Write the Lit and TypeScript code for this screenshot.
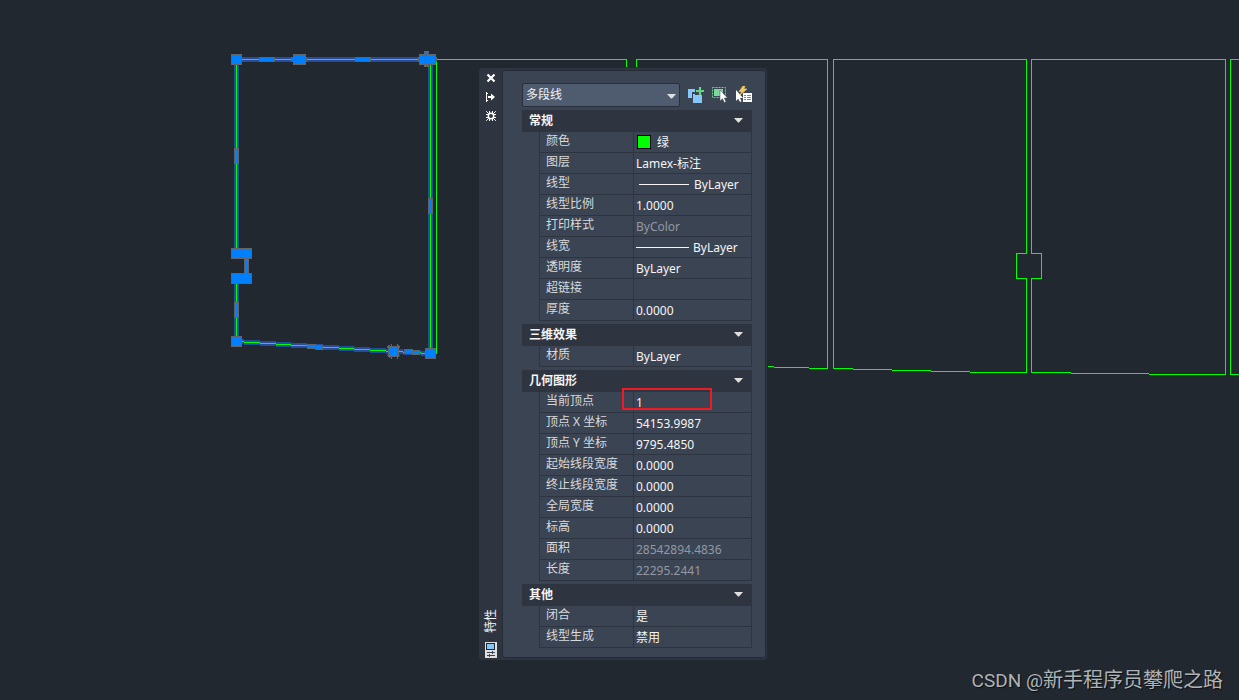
import { LitElement, html, svg, css, nothing } from "lit";
import { customElement, property } from "lit/decorators.js";

type Kind = "text" | "color" | "line" | "weight";
interface Prop {
  label: string;
  value: string;
  kind?: Kind;
  readonly?: boolean;
}
interface Section {
  title: string;
  props: Prop[];
}

const SECTIONS: Section[] = [
  {
    title: "常规",
    props: [
      { label: "颜色", value: "绿", kind: "color" },
      { label: "图层", value: "Lamex-标注" },
      { label: "线型", value: "ByLayer", kind: "line" },
      { label: "线型比例", value: "1.0000" },
      { label: "打印样式", value: "ByColor", readonly: true },
      { label: "线宽", value: "ByLayer", kind: "weight" },
      { label: "透明度", value: "ByLayer" },
      { label: "超链接", value: "" },
      { label: "厚度", value: "0.0000" },
    ],
  },
  { title: "三维效果", props: [{ label: "材质", value: "ByLayer" }] },
  {
    title: "几何图形",
    props: [
      { label: "当前顶点", value: "1" },
      { label: "顶点 X 坐标", value: "54153.9987" },
      { label: "顶点 Y 坐标", value: "9795.4850" },
      { label: "起始线段宽度", value: "0.0000" },
      { label: "终止线段宽度", value: "0.0000" },
      { label: "全局宽度", value: "0.0000" },
      { label: "标高", value: "0.0000" },
      { label: "面积", value: "28542894.4836", readonly: true },
      { label: "长度", value: "22295.2441", readonly: true },
    ],
  },
  {
    title: "其他",
    props: [
      { label: "闭合", value: "是" },
      { label: "线型生成", value: "禁用" },
    ],
  },
];

// Unselected wall outlines
const WALLS = [
  "M430 59.5H626.5V67",
  "M436.5 60V354",
  "M636.5 67V59.5H827.5V368.5H809M809 367.5H774M774 366.5H768",
  "M1026.5 253.5V59.5H833.5V368.5H853M853 369.5H892M892 370.5H931M931 371.5H970M970 372.5H1026.5V278.5H1016.5V253.5H1026.5",
  "M1031.5 253.5V59.5H1225.5V374.5H1149M1149 373.5H1071M1071 372.5H1031.5V278.5H1041.5V253.5H1031.5",
  "M1239 59.5H1230.5V374.5H1239",
];

// Selected polyline, with its sloping bottom edge stepped per pixel row
const SELECTED =
  "M430.5 353V59.5H236.5V253.5H246.5V278.5H236.5V341.5H244M244 342.5H260M260 343.5H276M276 344.5H291M291 345.5H307M307 346.5H323M323 347.5H339M339 348.5H354M354 349.5H370M370 350.5H386M386 351.5H403M403 352.5H421M421 353.5H430";

const MIDPOINTS: number[][] = [
  [259, 57, 16, 5], [291, 57, 16, 5], [355, 57, 16, 5], [418, 57, 19, 5], [424, 51, 5, 16],
  [234, 148, 5, 16], [428, 198, 5, 16], [244, 258, 5, 16], [234, 302, 5, 16],
  [307, 344, 9, 5], [315, 345, 8, 5], [404, 349, 9, 5], [412, 350, 8, 5],
];
const VERTICES: number[][] = [
  [231, 54], [293, 54], [295, 54], [419, 54], [425, 54],
  [231, 248], [241, 248], [231, 273], [241, 273],
  [231, 336], [388, 346], [425, 348],
];

@customElement("cad-drawing")
export class CadDrawing extends LitElement {
  static styles = css`
    :host { display: block; overflow: hidden; }
    svg { display: block; }
    .wall { fill: none; stroke: #00ff00; }
    .halo { fill: none; stroke: #244e9b; stroke-width: 5; }
    .grip { fill: #0080ff; stroke: #606468; }
    .spark { fill: none; stroke: #606468; stroke-width: 3; }
    .core { fill: none; stroke: #0080ff; }
  `;
  render() {
    return html`<svg width="1920" height="1080" shape-rendering="crispEdges" aria-hidden="true">
      <path class="halo" d=${SELECTED}></path>
      ${WALLS.map((d) => svg`<path class="wall" d=${d}></path>`)}
      <path class="wall" d=${SELECTED}></path>
      ${MIDPOINTS.map(([x, y, w, h]) => svg`<rect class="grip" x=${x + 0.5} y=${y + 0.5} width=${w - 1} height=${h - 1}></rect>`)}
      <path class="spark" d="M388 346L399 357M399 346L388 357"></path>
      <path class="core" d="M391.5 344V359M397.5 344V359"></path>
      ${VERTICES.map(([x, y]) => svg`<rect class="grip" x=${x + 0.5} y=${y + 0.5} width="10" height="10"></rect>`)}
    </svg>`;
  }
}

@customElement("property-section")
export class PropertySection extends LitElement {
  @property({ attribute: false }) section!: Section;

  static styles = css`
    :host { display: block; }
    .head {
      display: flex; align-items: center; justify-content: space-between;
      width: 100%; height: 22px; padding: 0 9px 0 7px; border: 0;
      background: #2e3440; color: #f5f5f5; font: inherit; font-weight: 700; line-height: 20px;
    }
    .arrow { display: block; margin-bottom: 2px; }
    table {
      width: calc(100% - 17px); margin-left: 17px;
      border-collapse: separate; border-spacing: 0; table-layout: fixed;
      border-left: 1px solid #2e3440;
    }
    th, td { height: 20px; padding: 0; border-right: 1px solid #2e3440; border-bottom: 1px solid #2e3440; }
    th { width: 93px; text-align: left; font-weight: 400; color: #d8dadd; }
    label { display: block; height: 20px; padding-left: 6px; line-height: 18px; white-space: nowrap; }
    .cell { display: flex; align-items: center; height: 20px; padding: 0 2px; }
    input {
      flex: 1; min-width: 0; width: 100%; height: 20px; padding: 0; border: 0; outline: 0;
      background: transparent; color: #f5f5f5; font: inherit;
    }
    input[readonly] { color: #9299a3; }
    .swatch { width: 12px; height: 12px; margin: 0 6px 0 1px; border: 1px solid #000; background: #00ff00; }
    .line { width: 50px; height: 1px; margin: 0 5px 0 3px; background: #f5f5f5; }
    .weight { width: 53px; height: 1px; margin-right: 4px; background: #f5f5f5; }
  `;
  render() {
    const { title, props } = this.section;
    return html`
      <button class="head" aria-expanded="true">
        <span>${title}</span>
        <svg class="arrow" width="9" height="5" aria-hidden="true"><path d="M0 0H9L5 4.500H4Z" fill="#e0e0e0" /></svg>
      </button>
      <table>
        ${props.map((p, i) => html`<tr>
          <th scope="row"><label for="p${i}">${p.label}</label></th>
          <td><div class="cell">
            ${p.kind === "color" ? html`<span class="swatch"></span>` : nothing}
            ${p.kind === "line" ? html`<span class="line"></span>` : nothing}
            ${p.kind === "weight" ? html`<span class="weight"></span>` : nothing}
            <input id="p${i}" type="text" .value=${p.value} ?readonly=${p.readonly} />
          </div></td>
        </tr>`)}
      </table>`;
  }
}

@customElement("property-palette")
export class PropertyPalette extends LitElement {
  static styles = css`
    :host {
      display: flex; box-sizing: border-box; padding: 2px 1px 2px 0;
      background: #2e3440; border-radius: 3px; color: #f5f5f5;
      font: 12px/18px "Noto Sans", "Noto Sans CJK SC", sans-serif;
    }
    .bar {
      display: flex; flex-direction: column; align-items: center; gap: 7px;
      width: 23px; padding-top: 2px;
    }
    button { display: block; padding: 0; border: 0; background: none; }
    .bar svg, .tools svg { display: block; }
    .name {
      margin: auto 0 2px; line-height: 16px;
      writing-mode: vertical-rl; text-orientation: sideways; transform: rotate(180deg);
    }
    .body {
      flex: 1; min-width: 0; padding: 12px 13px 9px 19px;
      background: #3b4453; border: 1px solid #262c36; border-radius: 3px;
    }
    .tools { display: flex; align-items: center; gap: 6px; margin-bottom: 3px; }
    .pick { position: relative; flex: 1; min-width: 0; margin-right: 1px; }
    select {
      display: block; width: 100%; height: 24px; padding: 0 3px; box-sizing: border-box;
      appearance: none; border: 1px solid #2a303b; border-radius: 2px;
      background: #4f5b6e; color: #f5f5f5; font: inherit;
    }
    .caret { position: absolute; right: 4px; top: 11px; pointer-events: none; }
    .list { display: grid; gap: 3px; }
  `;
  render() {
    return html`
      <div class="bar">
        <button aria-label="关闭"><svg width="12" height="12"><path d="M2.500 2.500L9.500 9.500M9.500 2.500L2.500 9.500" stroke="#fff" stroke-width="2.200" /></svg></button>
        <button aria-label="自动隐藏"><svg width="12" height="12" shape-rendering="crispEdges"><path d="M1 1h1v10H1zM2 2h1v1H2zM2 9h1v1H2zM3 5h5v2H3z" fill="#fff" /><path d="M6 2.500l4 3.500-4 3.500z" fill="#fff" shape-rendering="auto" /></svg></button>
        <button aria-label="设置"><svg width="12" height="12"><circle cx="6" cy="6" r="2.700" fill="none" stroke="#fff" stroke-width="1.500" /><path d="M4.500 1V4M7.500 1V4M4.500 8V11M7.500 8V11M1 4.500H4M1 7.500H4M8 4.500H11M8 7.500H11M1.200 1.200L3.800 3.800M10.800 1.200L8.200 3.800M1.200 10.800L3.800 8.200M10.800 10.800L8.200 8.200" fill="none" stroke="#fff" /></svg></button>
        <span class="name">特性</span>
        <svg width="12" height="16" shape-rendering="crispEdges" aria-hidden="true">
          <rect width="12" height="16" fill="#e0e0e0" /><rect x="1.500" y="1.500" width="8" height="6" fill="#86c6fa" stroke="#222830" />
          <path d="M2 10.500H10M2 13.500H10M7.500 9V12M4.500 12V15" stroke="#3b4453" fill="none" />
        </svg>
      </div>
      <div class="body">
        <div class="tools">
          <div class="pick">
            <select aria-label="对象类型"><option>多段线</option></select>
            <svg class="caret" width="9" height="5" aria-hidden="true"><path d="M0 0H9L5 4.500H4Z" fill="#e0e0e0" /></svg>
          </div>
          <button aria-label="切换 PICKADD"><svg width="18" height="18">
            <path d="M1 3H10V12H1Z" fill="#86c6fa" />
            <path d="M5 6H16V17H5Z" fill="#3b4453" /><path d="M6 8H15V17H6Z" fill="#86c6fa" />
            <path d="M8 1H17V9H8Z" fill="#3b4453" /><path d="M13 1V9M9 5H17" stroke="#62d387" stroke-width="2.200" />
          </svg></button>
          <button aria-label="选择对象"><svg width="18" height="18">
            <path d="M1.500 1.500H14.500V11.500H1.500Z" fill="none" stroke="#62d387" stroke-dasharray="2 1" />
            <path d="M3 3H12V10H3Z" fill="#7fd89b" />
            <path d="M9 4V15L11.500 12.800L13.200 16.500L15 15.700L13.400 12H16.500Z" fill="#fff" stroke="#3b4453" stroke-width=".5" />
          </svg></button>
          <button aria-label="快速选择"><svg width="17" height="18">
            <path d="M8 0L10 0 9 3H12L5 9 6.500 5.500H4Z" fill="#f5c860" stroke="#f5c860" stroke-width=".6" />
            <path d="M1 4V15L3.200 12.800L5 16L6.600 15.200L5 12H8Z" fill="#fff" />
            <path d="M8 7H17V16H8Z" fill="#fff" />
            <path d="M9 9H11V10H9ZM12 9H16V10H12ZM9 11H11V12H9ZM12 11H16V12H12ZM9 13H11V14H9ZM12 13H16V14H12Z" fill="#2c9cf0" />
          </svg></button>
        </div>
        <div class="list">
          ${SECTIONS.map((s) => html`<property-section .section=${s}></property-section>`)}
        </div>
      </div>`;
  }
}

@customElement("app-root")
export class AppRoot extends LitElement {
  static styles = css`
    :host { display: block; position: relative; height: 100vh; overflow: hidden; background: #212830; }
    cad-drawing { position: absolute; inset: 0; }
    property-palette { position: absolute; left: 479px; top: 68px; width: 288px; }
    .mark {
      position: absolute; left: 622px; top: 388px; width: 90px; height: 22px;
      box-sizing: border-box; border: 2px solid #ed1c24; pointer-events: none;
    }
    .credit {
      position: absolute; right: 16px; bottom: 5px; color: #b0b3b6;
      font: 20px/28px Roboto, "Noto Sans CJK SC", sans-serif; white-space: nowrap;
      text-shadow: 1px 1px 1px #0c0f12;
    }
    .site { font-size: 19px; }
  `;
  render() {
    return html`
      <cad-drawing></cad-drawing>
      <property-palette></property-palette>
      <div class="mark"></div>
      <div class="credit"><span class="site">CSDN @</span>新手程序员攀爬之路</div>`;
  }
}
